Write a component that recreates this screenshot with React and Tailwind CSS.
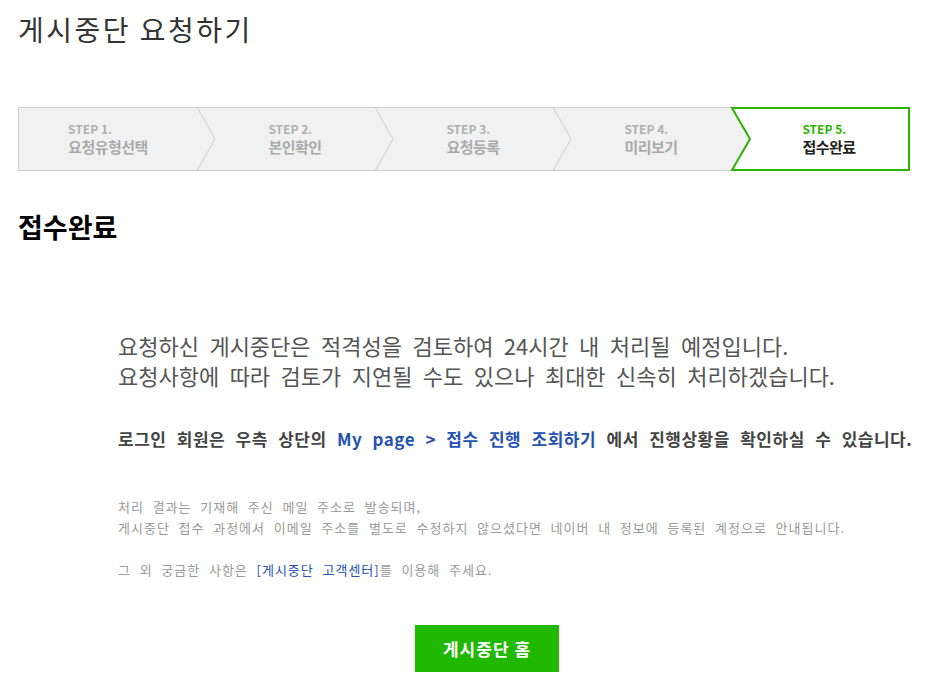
import React from 'react';

const steps = [
  { no: 'STEP 1.', label: '요청유형선택' },
  { no: 'STEP 2.', label: '본인확인' },
  { no: 'STEP 3.', label: '요청등록' },
  { no: 'STEP 4.', label: '미리보기' },
  { no: 'STEP 5.', label: '접수완료', active: true },
];

const font = "font-['Noto_Sans_CJK_KR','Noto_Sans',sans-serif]";

const StepBar = () => (
  <div className="flex w-[892px] h-[64px] border border-[#cccccc] bg-[#f1f1f1]">
    {steps.map((s, i) => (
      <div
        key={s.no}
        className={`relative w-[178px] flex items-center justify-center ${i > 0 ? 'pl-[18px]' : ''}`}
      >
        {s.active && (
          <svg className="absolute left-0 top-[-1px] w-[179px] h-[64px]" viewBox="0 0 179 64">
            <polygon points="1,1 178,1 178,63 1,63 19,32" fill="#ffffff" stroke="#2db400" strokeWidth="2" />
          </svg>
        )}
        <div className="relative flex flex-col">
          <span className={`text-[12px] leading-[16px] font-bold ${s.active ? 'text-[#2db400]' : 'text-[#b0b0b0]'}`}>
            {s.no}
          </span>
          <span className={`text-[15px] leading-[20px] font-bold tracking-[-0.5px] ${s.active ? 'text-[#222222]' : 'text-[#aaaaaa]'}`}>
            {s.label}
          </span>
        </div>
        {i < 3 && (
          <svg className="absolute right-[-18px] top-0 w-[18px] h-[62px] z-10" viewBox="0 0 18 62">
            <polyline points="0.5,0 18,31 0.5,62" fill="none" stroke="#cccccc" strokeWidth="1" />
          </svg>
        )}
      </div>
    ))}
  </div>
);

export default function App() {
  return (
    <div className={`w-[946px] min-h-[695px] bg-white px-[18px] ${font}`}>
      <h1 className="pt-[11px] text-[28px] leading-[36px] font-normal tracking-[2.5px] text-[#333333]">
        게시중단 요청하기
      </h1>

      <div className="mt-[60px]">
        <StepBar />
      </div>

      <h2 className="mt-[40px] text-[27px] leading-[32px] font-bold text-black">접수완료</h2>

      <div className="pl-[100px]">
        <div className="mt-[87px] text-[22px] leading-[30px] text-[#555555] [word-spacing:5.5px] whitespace-nowrap">
          <p>요청하신 게시중단은 적격성을 검토하여 24시간 내 처리될 예정입니다.</p>
          <p>요청사항에 따라 검토가 지연될 수도 있으나 최대한 신속히 처리하겠습니다.</p>
        </div>

        <p className="mt-[38px] text-[17px] leading-[22px] font-bold tracking-[0.5px] text-[#444444] [word-spacing:6px] whitespace-nowrap">
          로그인 회원은 우측 상단의{' '}
          <span className="text-[#2552b0]">My page &gt; 접수 진행 조회하기</span> 에서 진행상황을 확인하실 수 있습니다.
        </p>

        <div className="mt-[46px] text-[13px] leading-[21px] tracking-[1px] text-[#999999] [word-spacing:4.8px] whitespace-nowrap">
          <p>처리 결과는 기재해 주신 메일 주소로 발송되며,</p>
          <p>게시중단 접수 과정에서 이메일 주소를 별도로 수정하지 않으셨다면 네이버 내 정보에 등록된 계정으로 안내됩니다.</p>
          <p className="mt-[21px]">
            그 외 궁금한 사항은 <span className="text-[#2552b0]">[게시중단 고객센터]</span>를 이용해 주세요.
          </p>
        </div>
      </div>

      <div className="mt-[45px] flex justify-center pl-[28px]">
        <button className="w-[144px] h-[47px] bg-[#21b900] text-white text-[17px] tracking-[1px] font-bold">게시중단 홈</button>
      </div>
    </div>
  );
}
